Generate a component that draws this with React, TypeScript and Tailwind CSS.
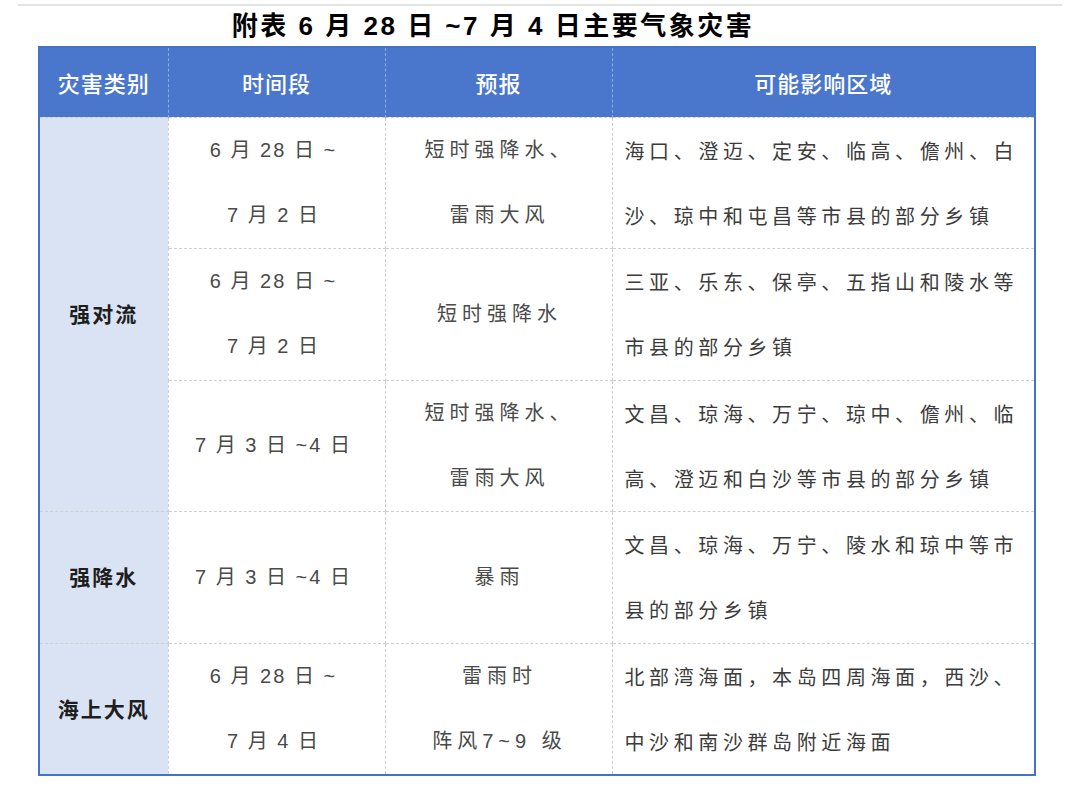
import React from 'react';

const cjk = '"Noto Sans CJK SC", "Noto Sans", sans-serif';
const mixed = '"Liberation Sans", "Noto Sans CJK SC", sans-serif';

type Row = {
  time: string[];
  forecast: string[];
  area: string[];
};

const rows: Row[] = [
  {
    time: ['6 月 28 日 ~', '7 月 2 日'],
    forecast: ['短时强降水、', '雷雨大风'],
    area: ['海口、澄迈、定安、临高、儋州、白', '沙、琼中和屯昌等市县的部分乡镇'],
  },
  {
    time: ['6 月 28 日 ~', '7 月 2 日'],
    forecast: ['短时强降水'],
    area: ['三亚、乐东、保亭、五指山和陵水等', '市县的部分乡镇'],
  },
  {
    time: ['7 月 3 日 ~4 日'],
    forecast: ['短时强降水、', '雷雨大风'],
    area: ['文昌、琼海、万宁、琼中、儋州、临', '高、澄迈和白沙等市县的部分乡镇'],
  },
  {
    time: ['7 月 3 日 ~4 日'],
    forecast: ['暴雨'],
    area: ['文昌、琼海、万宁、陵水和琼中等市', '县的部分乡镇'],
  },
  {
    time: ['6 月 28 日 ~', '7 月 4 日'],
    forecast: ['雷雨时', '阵风7~9 级'],
    area: ['北部湾海面，本岛四周海面，西沙、', '中沙和南沙群岛附近海面'],
  },
];

const heights = ['h-[131px]', 'h-[132px]', 'h-[131px]', 'h-[132px]', 'h-[131px]'];

function Lines({ lines, className }: { lines: string[]; className?: string }) {
  return (
    <div className={className}>
      {lines.map((l, i) => (
        <div key={i} className="leading-[65px] whitespace-nowrap">
          {l}
        </div>
      ))}
    </div>
  );
}

export default function App() {
  const cell = 'border border-dashed border-[#cfcfcf] p-0 align-middle';
  const catCell = `${cell} bg-[#dae3f3] text-center text-[21px] font-bold text-[#1e1e1e] tracking-[2px]`;

  return (
    <div className="w-[1080px] h-[789px] bg-white overflow-hidden" style={{ fontFamily: cjk }}>
      {/* top rule */}
      <div className="pt-[4px] px-[18px]">
        <div className="h-[2px] bg-[#e3e3e3]" />
      </div>

      {/* title */}
      <div className="h-[40px] flex items-center justify-center pr-[94px]">
        <h1
          className="text-[26px] font-bold text-black tracking-[2.5px] leading-none"
          style={{ fontFamily: mixed }}
        >
          附表 6 月 28 日 ~7 月 4 日主要气象灾害
        </h1>
      </div>

      {/* table */}
      <div className="pl-[38px]">
        <table className="w-[996px] border-collapse border-2 border-[#4472c4] table-fixed">
          <colgroup>
            <col className="w-[129px]" />
            <col className="w-[217px]" />
            <col className="w-[227px]" />
            <col className="w-[423px]" />
          </colgroup>
          <thead>
            <tr className="h-[70px] bg-[#4a77cc] text-white text-[22px] font-medium tracking-[1px]">
              <th className="border-r border-dashed border-[#8fabe0] font-medium p-0">灾害类别</th>
              <th className="border-r border-dashed border-[#8fabe0] font-medium p-0">时间段</th>
              <th className="border-r border-dashed border-[#8fabe0] font-medium p-0">预报</th>
              <th className="font-medium p-0">可能影响区域</th>
            </tr>
          </thead>
          <tbody className="text-[20px] text-[#4a4a4a]">
            {rows.map((r, i) => (
              <tr key={i} className={heights[i]}>
                {i === 0 && (
                  <td rowSpan={3} className={catCell}>
                    强对流
                  </td>
                )}
                {i === 3 && <td className={catCell}>强降水</td>}
                {i === 4 && <td className={`${catCell} tracking-[1px]`}>海上大风</td>}
                <td className={`${cell} text-center`} style={{ fontFamily: mixed }}>
                  <Lines lines={r.time} className="tracking-[2px] pr-[6px]" />
                </td>
                <td className={`${cell} text-center`} style={{ fontFamily: mixed }}>
                  <Lines lines={r.forecast} className="tracking-[5px] pl-[2px]" />
                </td>
                <td className={`${cell} text-left`}>
                  <Lines lines={r.area} className="tracking-[4.6px] pl-[12px] text-[#3c3c3c]" />
                </td>
              </tr>
            ))}
          </tbody>
        </table>
      </div>
    </div>
  );
}
